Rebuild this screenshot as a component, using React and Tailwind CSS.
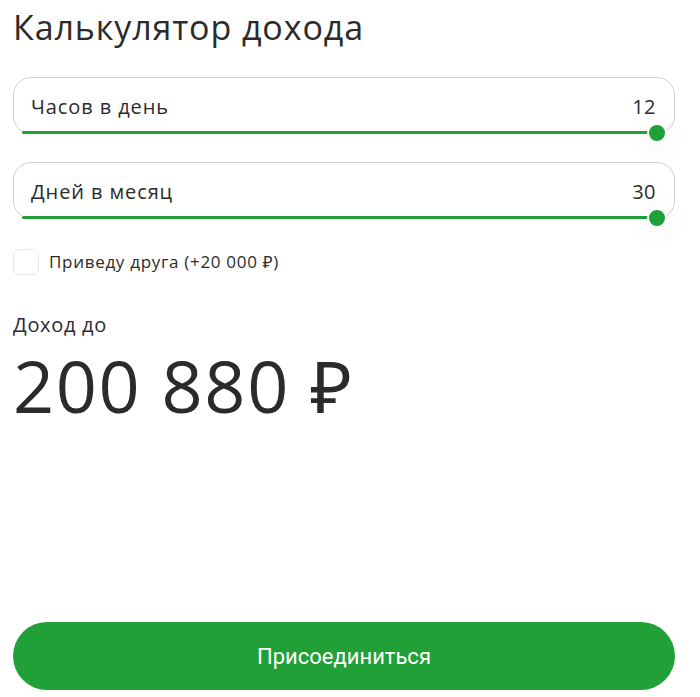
import React from "react";

function SliderField({ label, value }) {
  return (
    <div className="relative h-[57px] rounded-[18px] border border-[#cfcfd4] bg-white">
      <div className="flex h-full items-center justify-between pl-[17px] pr-[18px] pt-[2px]">
        <span className="text-[20px] tracking-[0.9px] text-[#2b2b2b]">{label}</span>
        <span className="text-[20px] tracking-[0.5px] text-[#2b2b2b]">{value}</span>
      </div>
      <div className="absolute bottom-[-1px] left-[8px] right-[17px] h-[3px] rounded-full bg-[#21a038]" />
      <div className="absolute bottom-[-10px] right-[7px] h-[20px] w-[20px] rounded-full border-[2px] border-white bg-[#21a038] shadow-[0_4px_30px_rgba(0,0,0,0.08)]" />
    </div>
  );
}

export default function App() {
  return (
    <div
      className="flex h-[697px] w-[700px] flex-col bg-white pl-[13px] pr-[25px] text-[#2b2b2b]"
      style={{ fontFamily: '"Open Sans", "Noto Sans", sans-serif' }}
    >
      <h1 className="mt-[5px] text-[34px] leading-[44px] tracking-[0.9px] text-[#2b2b2b]">
        Калькулятор дохода
      </h1>
      <div className="mt-[28px] flex flex-col gap-[28px]">
        <SliderField label="Часов в день" value="12" />
        <SliderField label="Дней в месяц" value="30" />
      </div>
      <label className="mt-[30px] flex items-center gap-[10px]">
        <span className="h-[26px] w-[26px] rounded-[6px] border border-[#e6e6ea] bg-white" />
        <span className="text-[17px] tracking-[0.7px] text-[#2b2b2b]">Приведу друга (+20 000 ₽)</span>
      </label>
      <div className="mt-[38px] text-[20px] leading-[24px] tracking-[0.7px]">Доход до</div>
      <div className="mt-[5px] text-[72px] leading-[86px] tracking-[1.6px] text-[#2b2b2b]">200 880 ₽</div>
      <div className="flex-1" />
      <button
        className="mb-[7px] flex h-[68px] w-full items-center justify-center rounded-full bg-[#21a038] text-[22px] text-white"
        style={{ fontFamily: 'Roboto, "Noto Sans", sans-serif' }}
      >
        Присоединиться
      </button>
    </div>
  );
}
